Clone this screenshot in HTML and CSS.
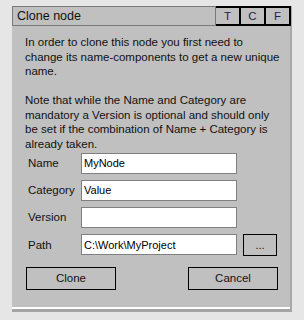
FILE: index.html
```html
<!DOCTYPE html>
<html lang="en">
<head>
    <meta charset="UTF-8" />
    <meta name="viewport" content="width=device-width, initial-scale=1.0" />
    <title>Clone node</title>
    <link rel="stylesheet" href="styles.css">
</head>
<body>

<div class="dialog">
    <div class="titlebar">
        <div class="title">Clone node</div>
        <div class="tab">T</div>
        <div class="tab">C</div>
        <div class="tab">F</div>
    </div>
    <div class="content">
        <p>In order to clone this node you first need to<br>change its name-components to get a new unique<br>name.</p>
        <p>Note that while the Name and Category are<br>mandatory a Version is optional and should only<br>be set if the combination of Name + Category is<br>already taken.</p>
        <form class="fields">
            <label>Name</label>
            <input type="text" class="field" value="MyNode" />
            <span></span>
            <label>Category</label>
            <input type="text" class="field" value="Value" />
            <span></span>
            <label>Version</label>
            <input type="text" class="field" value="" />
            <span></span>
            <label>Path</label>
            <input type="text" class="field" value="C:\Work\MyProject" />
            <button type="button" class="browse">...</button>
        </form>
        <div class="actions">
            <button type="button" class="btn">Clone</button>
            <button type="button" class="btn">Cancel</button>
        </div>
    </div>
</div>

</body>
</html>
```

FILE: styles.css
```css
body {
    margin: 0;
    background-color: #e6e6e6;
    font-family: "Liberation Sans", Arial, sans-serif;
    color: #111;
}
.dialog {
    width: 278px;
    margin: 6px 0 0 12px;
    background-color: #c0c0c0;
    border-right: 2px solid #a8a8a8;
    border-bottom: 3px solid #a4a4a4;
}
.titlebar {
    display: flex;
    height: 20px;
}
.title {
    flex: 1;
    border: 1px solid #7a7a7a;
    padding-left: 4px;
    font-size: 12.5px;
    line-height: 18px;
}
.tab {
    width: 23px;
    border: 2px solid #000;
    border-left-width: 0;
    text-align: center;
    font-size: 11.5px;
    line-height: 16px;
    color: #22224a;
}
.tab:first-of-type {
    border-left-width: 2px;
}
.tab:last-child {
    margin-right: -1px;
}
.content {
    box-sizing: border-box;
    height: 283px;
    padding: 9px 0 0 13px;
    border-bottom: 2px solid #fff;
}
p {
    margin: 0 0 14.5px;
    font-size: 11.5px;
    line-height: 14.5px;
    white-space: nowrap;
}
.fields {
    display: grid;
    grid-template-columns: 47px 156px 34px;
    column-gap: 6px;
    row-gap: 6px;
    align-items: center;
    margin-left: 3px;
    margin-top: -13px;
}
label {
    font-size: 11.5px;
}
.field {
    box-sizing: border-box;
    width: 156px;
    height: 21px;
    margin: 0;
    padding: 0 2px;
    border: 1px solid #808080;
    background: #fff;
    font-family: "Liberation Sans", Arial, sans-serif;
    font-size: 11px;
    color: #000;
    outline: none;
}
.browse, .btn {
    box-sizing: border-box;
    margin: 0;
    padding: 0;
    background: #c0c0c0;
    border: 1px solid #000;
    font-family: "Liberation Sans", Arial, sans-serif;
    color: #111;
}
.browse {
    height: 22px;
    font-size: 11px;
}
.actions {
    display: flex;
    justify-content: space-between;
    width: 252px;
    margin: 11px 0 0 1px;
}
.btn {
    width: 90px;
    height: 23px;
    font-size: 11.5px;
}
```
